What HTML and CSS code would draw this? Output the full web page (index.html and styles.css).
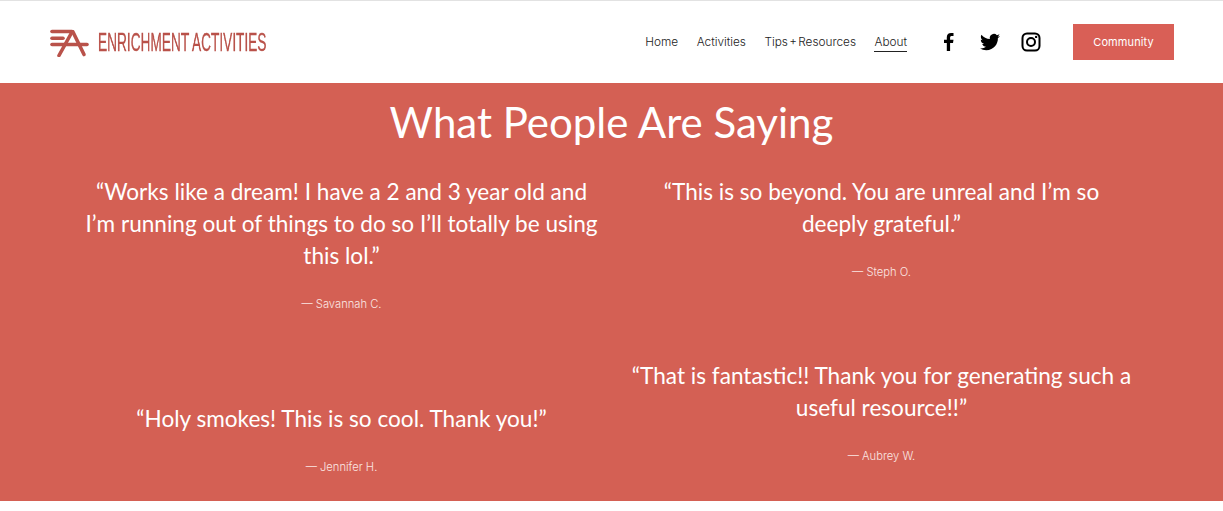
FILE: index.html
```html
<!DOCTYPE html>
<html lang="en">
  <head>
    <meta charset="UTF-8" />
    <meta name="viewport" content="width=device-width, initial-scale=1.0" />
    <title>Enrichment Activities</title>
    <link rel="stylesheet" href="styles.css">
  </head>
  <body>
    <div class="header">
      <a class="logo" href="#">
        <svg class="logo-mark" width="40" height="30" viewBox="0 0 40 30">
          <g fill="none" stroke="#b9524a" stroke-width="3.6" stroke-linecap="round">
            <path d="M2 4.500H22" />
            <path d="M2 11.200H13" />
            <path d="M2 17.500H37" />
            <path d="M22 5L9 28.500" />
            <path d="M23 5L34 27.500" />
          </g>
        </svg>
        <span class="logo-text">ENRICHMENT ACTIVITIES</span>
      </a>
      <div class="nav">
        <a href="#">Home</a>
        <a href="#">Activities</a>
        <a href="#">Tips + Resources</a>
        <a href="#" class="active">About</a>
      </div>
      <div class="social">
        <svg width="24" height="24" viewBox="0 0 24 24">
          <path d="M13.100 21v-8h2.900l.5-3.300h-3.400V7.700c0-1 .4-1.700 1.800-1.700h1.600V3.100C16.100 3 15.100 3 14.100 3c-2.600 0-4.300 1.500-4.300 4.300v2.400H7V13h2.800v8z" />
        </svg>
        <svg width="24" height="24" viewBox="0 0 24 24">
          <path d="M22 5.900c-.7.300-1.500.5-2.300.6.800-.5 1.500-1.300 1.800-2.200-.8.500-1.700.8-2.600 1A4.100 4.100 0 0 0 11.900 9.100C8.500 8.900 5.500 7.300 3.400 4.800c-1.100 1.900-.5 4.300 1.300 5.500-.7 0-1.300-.2-1.900-.5 0 2 1.400 3.700 3.300 4.100-.6.200-1.200.2-1.900.1.500 1.600 2 2.800 3.800 2.800A8.200 8.200 0 0 1 2 18.500 11.600 11.600 0 0 0 8.300 20.300c7.600 0 11.900-6.400 11.600-12.200.8-.6 1.500-1.300 2.100-2.200z" />
        </svg>
        <svg width="24" height="24" viewBox="0 0 24 24">
          <g fill="none" stroke="#000" stroke-width="2">
            <rect x="3.500" y="3.500" width="17" height="17" rx="4.500" />
            <circle cx="12" cy="12" r="4" />
          </g>
          <circle cx="17.100" cy="6.900" r="1.200" />
        </svg>
      </div>
      <a class="btn" href="#">Community</a>
    </div>

    <div class="section">
      <h1>What People Are Saying</h1>
      <div class="columns">
        <div class="col">
          <div class="quote">
            <p>“Works like a dream! I have a 2 and 3 year old and I’m running out of things to do so I’ll totally be using this lol.”</p>
            <div class="who">— Savannah C.</div>
          </div>
          <div class="quote left-second">
            <p>“Holy smokes! This is so cool. Thank you!”</p>
            <div class="who">— Jennifer H.</div>
          </div>
        </div>
        <div class="col col-right">
          <div class="quote">
            <p>“This is so beyond. You are unreal and I’m so deeply grateful.”</p>
            <div class="who">— Steph O.</div>
          </div>
          <div class="quote right-second">
            <p>“That is fantastic!! Thank you for generating such a useful resource!!”</p>
            <div class="who">— Aubrey W.</div>
          </div>
        </div>
      </div>
    </div>
  </body>
</html>
```

FILE: styles.css
```css
html,
body {
  margin: 0;
  background: #fff;
}
body {
  font-family: "Lato", "Liberation Sans", sans-serif;
  height: 511px;
  overflow: hidden;
}
a {
  text-decoration: none;
  color: inherit;
}
.header {
  height: 82px;
  border-top: 1px solid #e2e2e2;
  padding: 0 49px 0 50px;
  display: flex;
  align-items: center;
}
.logo {
  display: flex;
  align-items: center;
  gap: 8px;
  margin-right: auto;
}
.logo-text {
  width: 168px;
  font-size: 25px;
  color: #b9524a;
  white-space: nowrap;
  font-family: "Liberation Sans", sans-serif;
  -webkit-text-stroke: 0.3px #b9524a;
  transform: scaleX(0.547);
  transform-origin: left center;
  will-change: transform;
}
.nav {
  display: flex;
  gap: 18.500px;
  margin-top: 2px;
  font-family: "Inter", sans-serif;
  font-size: 11.800px;
  font-weight: 300;
  word-spacing: -2px;
  color: #222;
}
.nav .active {
  border-bottom: 1px solid #222;
  padding-bottom: 2px;
}
.social {
  display: flex;
  gap: 17px;
  margin-left: 30px;
}
.btn {
  margin-left: 30px;
  width: 101px;
  height: 36px;
  background: #d95f56;
  color: #fff;
  font-family: "Inter", sans-serif;
  font-size: 11px;
  font-weight: 400;
  letter-spacing: 0.1px;
  display: flex;
  align-items: center;
  justify-content: center;
}
.section {
  height: 418px;
  background: #d46054;
  color: #fff;
}
h1 {
  margin: 0;
  padding-top: 13px;
  text-align: center;
  font-size: 42px;
  font-weight: 400;
  line-height: 53px;
}
.columns {
  display: grid;
  grid-template-columns: 540px 540px;
  justify-content: center;
  margin-top: 27px;
}
.quote {
  text-align: center;
  padding: 0 10px;
}
.col-right .quote {
  padding: 0 18px;
}
.quote p {
  margin: 0;
  font-size: 22.600px;
  line-height: 32px;
}
.who {
  margin-top: 23px;
  font-family: "Inter", sans-serif;
  font-size: 11.200px;
  font-weight: 300;
  line-height: 18px;
  color: #fbe6e3;
}
.left-second {
  margin-top: 90px;
}
.right-second {
  margin-top: 79px;
}
```
